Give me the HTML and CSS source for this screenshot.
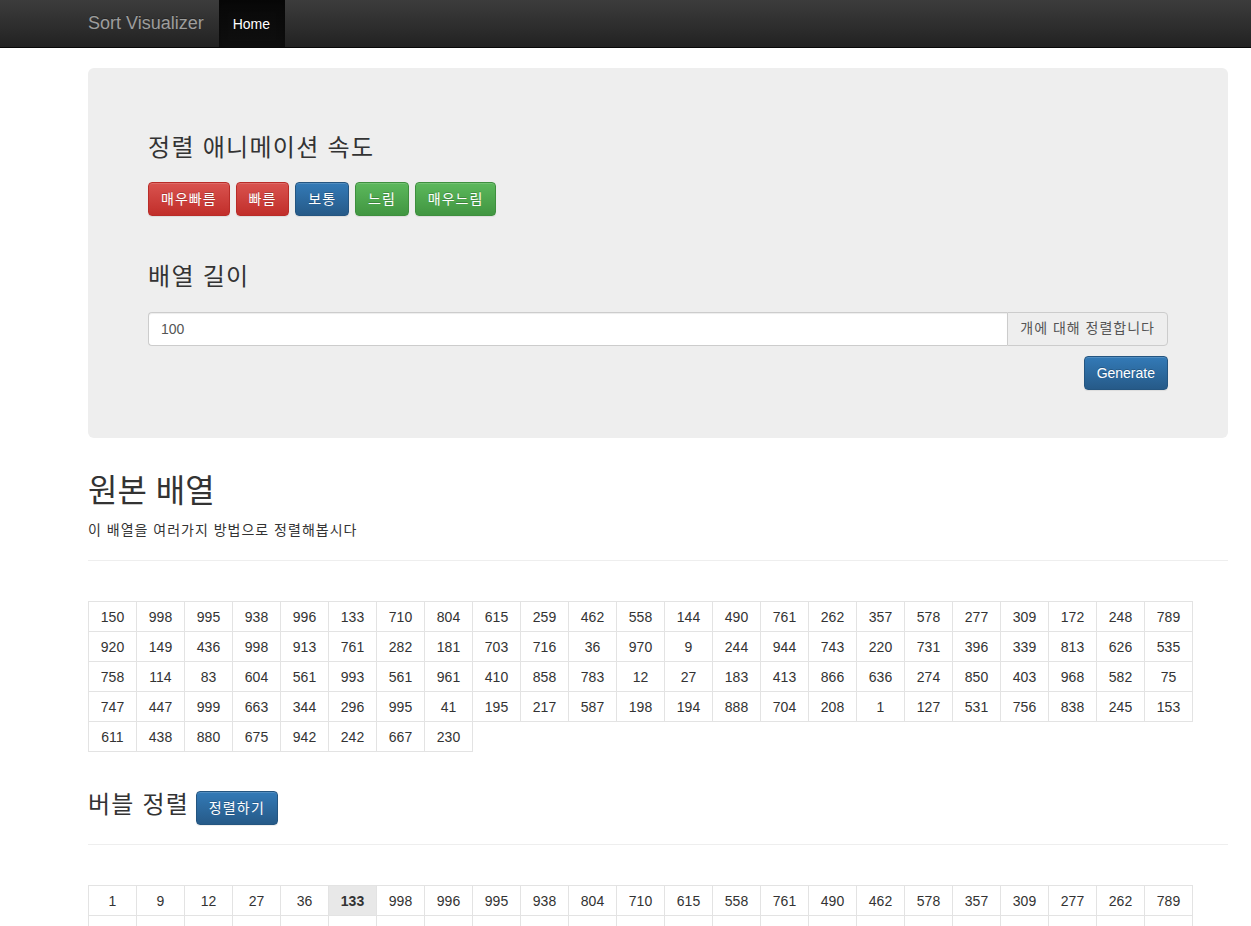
FILE: index.html
```html
<!DOCTYPE html>
<html lang="ko">
<head>
<meta charset="utf-8">
<title>Sort Visualizer</title>
<link rel="stylesheet" href="styles.css">
</head>
<body>
<nav class="navbar">
  <div class="container nav-inner">
    <a class="brand" href="#">Sort Visualizer</a>
    <ul class="nav-links">
      <li><a class="nav-link active" href="#">Home</a></li>
    </ul>
  </div>
</nav>

<div class="container">
  <div class="jumbotron">
    <h3 class="jumbo-title ko">정렬 애니메이션 속도</h3>
    <div class="speed-buttons">
      <button class="btn btn-danger ko">매우빠름</button>
      <button class="btn btn-danger ko">빠름</button>
      <button class="btn btn-primary ko">보통</button>
      <button class="btn btn-success ko">느림</button>
      <button class="btn btn-success ko">매우느림</button>
    </div>
    <h3 class="jumbo-title second ko">배열 길이</h3>
    <div class="input-group">
      <input class="form-control" type="text" value="100">
      <span class="addon ko">개에 대해 정렬합니다</span>
    </div>
    <div class="generate-row">
      <button class="btn btn-primary">Generate</button>
    </div>
  </div>

  <div class="page-header original">
    <h1 class="big-title">원본 배열</h1>
    <p class="lead-text ko">이 배열을 여러가지 방법으로 정렬해봅시다</p>
  </div>

  <div class="num-grid first-grid">
    <div class="cell">150</div><div class="cell">998</div><div class="cell">995</div><div class="cell">938</div><div class="cell">996</div><div class="cell">133</div><div class="cell">710</div><div class="cell">804</div><div class="cell">615</div><div class="cell">259</div><div class="cell">462</div><div class="cell">558</div><div class="cell">144</div><div class="cell">490</div><div class="cell">761</div><div class="cell">262</div><div class="cell">357</div><div class="cell">578</div><div class="cell">277</div><div class="cell">309</div><div class="cell">172</div><div class="cell">248</div><div class="cell">789</div>
    <div class="cell">920</div><div class="cell">149</div><div class="cell">436</div><div class="cell">998</div><div class="cell">913</div><div class="cell">761</div><div class="cell">282</div><div class="cell">181</div><div class="cell">703</div><div class="cell">716</div><div class="cell">36</div><div class="cell">970</div><div class="cell">9</div><div class="cell">244</div><div class="cell">944</div><div class="cell">743</div><div class="cell">220</div><div class="cell">731</div><div class="cell">396</div><div class="cell">339</div><div class="cell">813</div><div class="cell">626</div><div class="cell">535</div>
    <div class="cell">758</div><div class="cell">114</div><div class="cell">83</div><div class="cell">604</div><div class="cell">561</div><div class="cell">993</div><div class="cell">561</div><div class="cell">961</div><div class="cell">410</div><div class="cell">858</div><div class="cell">783</div><div class="cell">12</div><div class="cell">27</div><div class="cell">183</div><div class="cell">413</div><div class="cell">866</div><div class="cell">636</div><div class="cell">274</div><div class="cell">850</div><div class="cell">403</div><div class="cell">968</div><div class="cell">582</div><div class="cell">75</div>
    <div class="cell">747</div><div class="cell">447</div><div class="cell">999</div><div class="cell">663</div><div class="cell">344</div><div class="cell">296</div><div class="cell">995</div><div class="cell">41</div><div class="cell">195</div><div class="cell">217</div><div class="cell">587</div><div class="cell">198</div><div class="cell">194</div><div class="cell">888</div><div class="cell">704</div><div class="cell">208</div><div class="cell">1</div><div class="cell">127</div><div class="cell">531</div><div class="cell">756</div><div class="cell">838</div><div class="cell">245</div><div class="cell">153</div>
    <div class="cell">611</div><div class="cell">438</div><div class="cell">880</div><div class="cell">675</div><div class="cell">942</div><div class="cell">242</div><div class="cell">667</div><div class="cell">230</div>
  </div>

  <div class="page-header bubble">
    <h3 class="mid-title"><span class="ko">버블 정렬</span> <button class="btn btn-primary ko">정렬하기</button></h3>
  </div>

  <div class="num-grid">
    <div class="cell">1</div><div class="cell">9</div><div class="cell">12</div><div class="cell">27</div><div class="cell">36</div><div class="cell current">133</div><div class="cell">998</div><div class="cell">996</div><div class="cell">995</div><div class="cell">938</div><div class="cell">804</div><div class="cell">710</div><div class="cell">615</div><div class="cell">558</div><div class="cell">761</div><div class="cell">490</div><div class="cell">462</div><div class="cell">578</div><div class="cell">357</div><div class="cell">309</div><div class="cell">277</div><div class="cell">262</div><div class="cell">789</div>
    <div class="cell">920</div><div class="cell">858</div><div class="cell">436</div><div class="cell">998</div><div class="cell">913</div><div class="cell">761</div><div class="cell">282</div><div class="cell">913</div><div class="cell">703</div><div class="cell">716</div><div class="cell">181</div><div class="cell">970</div><div class="cell">150</div><div class="cell">244</div><div class="cell">944</div><div class="cell">743</div><div class="cell">220</div><div class="cell">731</div><div class="cell">396</div><div class="cell">339</div><div class="cell">813</div><div class="cell">626</div><div class="cell">535</div>
  </div>
</div>
</body>
</html>
```

FILE: styles.css
```css
html, body {
  margin: 0;
  padding: 0;
}

body {
  font-family: "Liberation Sans", "Noto Sans CJK KR", sans-serif;
  font-size: 14px;
  line-height: 1.42857;
  color: #333;
  background: #fff;
  overflow: hidden;
}

.ko {
  letter-spacing: 1px;
}

.container {
  width: 1140px;
  margin-left: 88px;
}

/* navbar */
.navbar {
  height: 47px;
  border-bottom: 1px solid #080808;
  background: linear-gradient(#3c3c3c, #222);
}

.nav-inner {
  display: flex;
  align-items: stretch;
  height: 47px;
}

.brand {
  font-size: 18px;
  line-height: 20px;
  color: #9d9d9d;
  text-decoration: none;
  padding: 13px 15px 14px 0;
  text-shadow: 0 -1px 0 rgba(0, 0, 0, .25);
}

.nav-links {
  list-style: none;
  margin: 0;
  padding: 0;
  display: flex;
}

.nav-link {
  display: block;
  height: 47px;
  box-sizing: border-box;
  padding: 14px 15px 14px 14px;
  line-height: 20px;
  color: #9d9d9d;
  text-decoration: none;
}

.nav-link.active {
  color: #fff;
  background: linear-gradient(#080808, #0f0f0f);
  box-shadow: inset 0 3px 9px rgba(0, 0, 0, .25);
  text-shadow: 0 -1px 0 rgba(0, 0, 0, .25);
}

/* jumbotron */
.jumbotron {
  margin-top: 20px;
  background: #eee;
  border-radius: 6px;
  padding: 48px 60px;
  height: 370px;
  box-sizing: border-box;
}

.jumbo-title {
  font-size: 24px;
  font-weight: 400;
  line-height: 1.1;
  margin: 19px 0 10px;
}

.jumbo-title.ko {
  letter-spacing: 1.3px;
}

.jumbo-title.second {
  margin-top: 48px;
}

.speed-buttons {
  display: flex;
  gap: 6px;
  margin-top: 21px;
}

.btn {
  display: inline-block;
  font-family: inherit;
  font-size: 14px;
  line-height: 20px;
  padding: 6px 12px;
  border: 1px solid transparent;
  border-radius: 4px;
  color: #fff;
  cursor: pointer;
  text-shadow: 0 -1px 0 rgba(0, 0, 0, .2);
  box-shadow: inset 0 1px 0 rgba(255, 255, 255, .15), 0 1px 1px rgba(0, 0, 0, .075);
  vertical-align: baseline;
}

.btn-danger {
  background: linear-gradient(#d9534f, #c12e2a);
  border-color: #b92c28;
}

.btn-primary {
  background: linear-gradient(#337ab7, #265a88);
  border-color: #245580;
}

.btn-success {
  background: linear-gradient(#5cb85c, #419641);
  border-color: #3e8f3e;
}

.input-group {
  display: flex;
  margin-top: 21px;
  height: 34px;
}

.form-control {
  flex: 1;
  height: 34px;
  box-sizing: border-box;
  padding: 6px 12px;
  font-family: inherit;
  font-size: 14px;
  color: #555;
  background: #fff;
  border: 1px solid #ccc;
  border-right: 0;
  border-radius: 4px 0 0 4px;
  box-shadow: inset 0 1px 1px rgba(0, 0, 0, .075);
  outline: none;
}

.addon {
  display: flex;
  align-items: center;
  box-sizing: border-box;
  padding: 6px 12px;
  font-size: 14px;
  color: #555;
  background: #eee;
  border: 1px solid #ccc;
  border-radius: 0 4px 4px 0;
  white-space: nowrap;
}

.generate-row {
  display: flex;
  justify-content: flex-end;
  margin-top: 10px;
}

/* page headers */
.page-header {
  border-bottom: 1px solid #eee;
  padding-bottom: 9px;
}

.page-header.original {
  margin-top: 36px;
}

.big-title {
  font-size: 32px;
  font-weight: 400;
  line-height: 1.1;
  margin: 0 0 12px;
}

.lead-text {
  margin: 0 0 10px;
}

.page-header.bubble {
  margin-top: 39px;
}

.mid-title {
  font-size: 24px;
  font-weight: 400;
  line-height: 1.1;
  margin: 0 0 10px;
}

.mid-title > .ko {
  letter-spacing: 1.2px;
}

/* number grid */
.num-grid {
  display: flex;
  flex-wrap: wrap;
  width: 1105px;
  box-sizing: border-box;
  margin-top: 40px;
}

.cell {
  width: 48px;
  height: 30px;
  box-sizing: border-box;
  border-right: 1px solid #e3e3e3;
  border-bottom: 1px solid #e3e3e3;
  display: flex;
  align-items: center;
  justify-content: center;
  line-height: 20px;
}

.cell:nth-child(23n + 1) {
  width: 49px;
  border-left: 1px solid #e3e3e3;
}

.cell:nth-child(-n + 23) {
  height: 31px;
  border-top: 1px solid #e3e3e3;
}

.cell.current {
  background: #e8e8e8;
  font-weight: bold;
}
```
